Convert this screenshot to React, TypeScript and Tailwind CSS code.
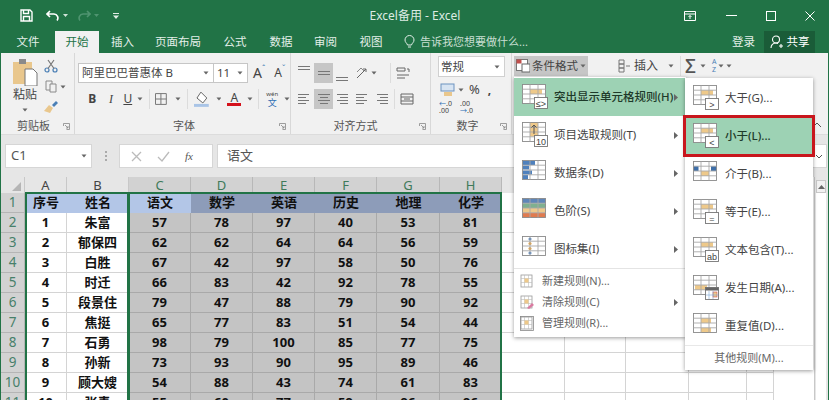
import React from "react";

const CJK = { fontFamily: '"Noto Sans", "Noto Sans CJK SC", sans-serif' };

const rows: [string, string, number, number, number, number, number, number][] = [
  ["1", "朱富", 57, 78, 97, 40, 53, 81],
  ["2", "郁保四", 62, 62, 64, 64, 56, 59],
  ["3", "白胜", 67, 42, 97, 58, 50, 76],
  ["4", "时迁", 66, 83, 42, 92, 78, 55],
  ["5", "段景住", 79, 47, 88, 79, 90, 92],
  ["6", "焦挺", 65, 77, 83, 51, 54, 44],
  ["7", "石勇", 98, 79, 100, 85, 77, 75],
  ["8", "孙新", 73, 93, 90, 95, 89, 46],
  ["9", "顾大嫂", 54, 88, 43, 74, 61, 83],
  ["10", "张青", 55, 60, 77, 59, 96, 96],
];

function Caret({ className = "" }: { className?: string }) {
  return (
    <svg width="6" height="4" viewBox="0 0 6 4" className={className}>
      <path d="M0.5 0.5h5L3 3.5z" fill="#666" />
    </svg>
  );
}

function Launcher() {
  return (
    <svg width="7" height="7" viewBox="0 0 7 7" className="absolute right-[4px] bottom-[4px]">
      <path d="M0.5 3V0.5H6.5V6.5H3.5M2 2l3 3M5 3v2H3" fill="none" stroke="#888" strokeWidth="0.8" />
    </svg>
  );
}

function Save() {
  return (
    <svg width="13" height="13" viewBox="0 0 13 13" fill="none" stroke="#fff" strokeWidth="1.4">
      <path d="M1 1h9l2 2v9H1z" />
      <path d="M3.500 1v3.500h5V1M3.500 12V7.500h6V12" />
    </svg>
  );
}

function Lines({ kind }: { kind: "l" | "c" | "r" | "top" | "mid" | "bot" }) {
  const xs: Record<string, [number, number][]> = {
    l: [[1, 12], [1, 9], [1, 12], [1, 9]],
    c: [[1, 13], [3, 11], [1, 13], [3, 11]],
    r: [[2, 13], [5, 13], [2, 13], [5, 13]],
    top: [[1, 13], [1, 13]],
    mid: [[1, 13], [1, 13]],
    bot: [[1, 13], [1, 13]],
  };
  const ys: Record<string, number[]> = {
    l: [2.5, 5.5, 8.5, 11.5],
    c: [2.5, 5.5, 8.5, 11.5],
    r: [2.5, 5.5, 8.5, 11.5],
    top: [2.5, 5.5],
    mid: [5.5, 8.5],
    bot: [8.5, 11.5],
  };
  return (
    <svg width="14" height="14" viewBox="0 0 14 14" stroke="#777" strokeWidth="1">
      {ys[kind].map((y, i) => (
        <line key={i} x1={xs[kind][i][0]} x2={xs[kind][i][1]} y1={y} y2={y} />
      ))}
    </svg>
  );
}

type Kind = "gt" | "lt" | "btw" | "eq" | "ab" | "date" | "dup" | "hl" | "top" | "bar" | "scale" | "set";

function Grid() {
  return (
    <g stroke="#8a8a8a" strokeWidth="0.9" fill="none">
      <rect x="0.5" y="0.5" width="23" height="19" />
      <path d="M8 .5v19M16 .5v19M.5 5.200h23M.5 10h23M.5 14.800h23" stroke="#a8a8a8" />
    </g>
  );
}

function Badge({ t }: { t: string }) {
  return (
    <g>
      <rect x="12.500" y="13.500" width="13" height="11" fill="#fff" stroke="#777" strokeWidth="0.9" />
      <text x="19" y="22.500" textAnchor="middle" fontSize="9" fill="#444" fontFamily="Liberation Sans, sans-serif">
        {t}
      </text>
    </g>
  );
}

function MenuIcon({ kind }: { kind: Kind }) {
  return (
    <svg width="27" height="26" viewBox="0 0 27 26" className="shrink-0">
      <rect x="0.5" y="0.5" width="23" height="19" fill="#fff" />
      {(kind === "gt" || kind === "lt" || kind === "eq" || kind === "ab" || kind === "hl") && (
        <rect x="8" y="5.200" width="12" height="4.800" fill="#eec98a" />
      )}
      {kind === "btw" && (
        <>
          <rect x="8" y="10" width="8" height="5" fill="#eec98a" />
          <rect x="0.5" y="5.200" width="5" height="4.800" fill="#3f6fa8" />
          <rect x="18" y="5.200" width="5.500" height="4.800" fill="#3f6fa8" />
        </>
      )}
      {kind === "date" && <rect x="2" y="10" width="12" height="4.800" fill="#eec98a" />}
      {kind === "dup" && (
        <>
          <rect x="8" y="5.200" width="10" height="4.800" fill="#eec98a" />
          <rect x="8" y="14.800" width="10" height="4.800" fill="#eec98a" />
        </>
      )}
      {kind === "top" && <rect x="8" y="0.5" width="8" height="14" fill="#eec98a" />}
      {kind === "bar" && (
        <>
          <rect x="1" y="1" width="12" height="4" fill="#4f81bd" />
          <rect x="1" y="5.500" width="6" height="4" fill="#4f81bd" />
          <rect x="1" y="10.500" width="9" height="4" fill="#4f81bd" />
          <rect x="1" y="15" width="5" height="4" fill="#4f81bd" />
        </>
      )}
      {kind === "scale" && (
        <>
          <rect x="0.5" y="0.5" width="23" height="4.700" fill="#5f86b8" />
          <rect x="0.5" y="5.200" width="23" height="4.800" fill="#7fb08f" />
          <rect x="0.5" y="10" width="23" height="4.800" fill="#eec98a" />
          <rect x="0.5" y="14.800" width="23" height="4.700" fill="#e07b4f" />
        </>
      )}
      {kind === "set" && (
        <>
          <circle cx="8" cy="3" r="1.500" fill="#4f81bd" />
          <circle cx="8" cy="7.600" r="1.500" fill="#e8a13a" />
          <circle cx="8" cy="12.400" r="1.500" fill="#e8a13a" />
          <circle cx="8" cy="17" r="1.500" fill="#4f81bd" />
        </>
      )}
      <Grid />
      {kind === "top" && <path d="M12 12V3M9.500 5.500L12 3l2.500 2.500" stroke="#555" fill="none" strokeWidth="1" />}
      {kind === "hl" && <Badge t="≤>" />}
      {kind === "gt" && <Badge t=">" />}
      {kind === "lt" && <Badge t="<" />}
      {kind === "eq" && <Badge t="=" />}
      {kind === "ab" && <Badge t="ab" />}
      {kind === "top" && <Badge t="10" />}
      {kind === "date" && (
        <g>
          <rect x="12.500" y="12.500" width="13" height="12" fill="#fff" stroke="#777" strokeWidth="0.9" />
          <rect x="12.500" y="12.500" width="13" height="3" fill="#666" />
          <rect x="20" y="17" width="4" height="5" fill="#eec98a" stroke="#c55" strokeWidth="0.6" />
          <path d="M16 16v8M20 16v8M13 20h12" stroke="#7da7d9" strokeWidth="0.6" />
        </g>
      )}
    </svg>
  );
}

function SmallRule({ kind }: { kind: "new" | "clear" | "manage" }) {
  return (
    <svg width="14" height="15" viewBox="0 0 14 15" className="shrink-0">
      <rect x="1" y="1" width="11" height="12" fill="#fff" stroke="#999" strokeWidth="0.8" />
      <path d="M1 4.500h11M1 8.500h11M4.500 1v12M8.500 1v12" stroke="#bbb" strokeWidth="0.6" />
      <rect x="4.500" y="4.500" width="4" height="4" fill="#eec98a" />
      {kind === "clear" && <path d="M7 13l5-5 2 2-5 4z" fill="#d97aa0" />}
      {kind === "manage" && <rect x="0.500" y="0.500" width="13" height="14" fill="none" stroke="#888" strokeWidth="0.8" />}
    </svg>
  );
}

function Arrow() {
  return (
    <svg width="4" height="7" viewBox="0 0 4 7" className="shrink-0">
      <path d="M0 0l4 3.500L0 7z" fill="#666" />
    </svg>
  );
}

function M1({ kind, label, active }: { kind: Kind; label: string; active?: boolean }) {
  return (
    <div className={active ? "h-[38px] flex items-center pl-[8px] pr-[8px] bg-[#9dd2b4]" : "h-[38px] flex items-center pl-[8px] pr-[8px]"}>
      <MenuIcon kind={kind} />
      <span className={active ? "ml-[5px] flex-1 text-[11.5px] font-medium text-[#1e3a2a]" : "ml-[5px] flex-1 text-[11.5px] text-[#444]"}>{label}</span>
      <Arrow />
    </div>
  );
}

function M2({ kind, label, active }: { kind: Kind; label: string; active?: boolean }) {
  return (
    <div
      className={
        active
          ? "h-[38px] flex items-center pl-[8px] bg-[#9dd2b4] outline-[3px] -outline-offset-1 outline-[#c8161d] relative"
          : "h-[38px] flex items-center pl-[8px]"
      }
    >
      <MenuIcon kind={kind} />
      <span className={active ? "ml-[5px] text-[11.5px] font-medium text-[#1e3a2a]" : "ml-[5px] text-[11.5px] text-[#444]"}>{label}</span>
    </div>
  );
}

function Ribbon() {
  return (
    <div className="h-[82px] bg-[#f1f1f1] flex text-[#444] border-b border-[#dcdcdc]">
      {/* clipboard */}
      <div className="w-[74px] relative flex flex-col border-r border-[#d8d8d8] shrink-0">
        <div className="flex pl-[11px] pt-[6px] h-[65px]">
          <div className="w-[26px] flex flex-col items-center">
            <svg width="26" height="27" viewBox="0 0 26 27">
              <rect x="1" y="3" width="19" height="22" fill="#e9c78d" />
              <rect x="7" y="0" width="7" height="5" fill="#8a8a8a" />
              <path d="M13 10h8l4 4v13H13z" fill="#fff" stroke="#777" />
            </svg>
            <span className="text-[12px] leading-[14px] mt-[2px]">粘贴</span>
            <Caret className="mt-[6px]" />
          </div>
          <div className="ml-[6px] flex flex-col items-center gap-[7px]">
            <svg width="14" height="14" viewBox="0 0 14 14" fill="none" stroke="#4a7fb5" strokeWidth="1.2">
              <circle cx="3" cy="11" r="2" />
              <circle cx="11" cy="11" r="2" />
              <path d="M4 9.500L10 1M10 9.500L4 1" stroke="#777" />
            </svg>
            <div className="flex items-center gap-[3px] -mr-[8px]">
              <svg width="12" height="13" viewBox="0 0 12 13" fill="none" stroke="#8a8a8a">
                <path d="M1 1h6v9H1z" />
                <path d="M5 4h6v8H5z" fill="#f1f1f1" />
              </svg>
              <Caret />
            </div>
            <svg width="14" height="13" viewBox="0 0 14 13">
              <path d="M0 11l5-6 4 3-3 5z" fill="#e9c78d" />
              <path d="M8 5l4-4 2 2-4 4z" fill="#4a7fb5" />
            </svg>
          </div>
        </div>
        <div className="text-[11px] leading-[16px] text-center pr-[8px] text-[#555]">剪贴板</div>
        <Launcher />
      </div>

      {/* font */}
      <div className="w-[216px] relative flex flex-col border-r border-[#d8d8d8] shrink-0 pl-[3px]">
        <div className="mt-[10px] flex items-center h-[20px]">
          <div className="w-[136px] h-[20px] bg-white border border-[#c6c6c6] flex items-center justify-between pl-[3px] pr-[4px] text-[11.5px]">
            <span>阿里巴巴普惠体 B</span>
            <Caret />
          </div>
          <div className="w-[34px] h-[20px] bg-white border border-l-0 border-[#c6c6c6] flex items-center justify-between pl-[3px] pr-[4px] text-[11.5px]">
            <span>11</span>
            <Caret />
          </div>
          <span className="ml-[5px] text-[14px] leading-none">A</span>
          <span className="text-[8px] leading-none -mt-[8px] text-[#4a7fb5]">ˆ</span>
          <span className="ml-[9px] text-[12px] leading-none">A</span>
          <span className="text-[8px] leading-none -mt-[8px] text-[#4a7fb5]">ˇ</span>
        </div>
        <div className="mt-[6px] flex items-center h-[20px] pl-[5px] text-[12px]">
          <span className="w-[19px] text-center font-bold">B</span>
          <span className="w-[19px] text-center italic" style={{ fontFamily: "Liberation Serif, serif" }}>I</span>
          <span className="w-[15px] text-center underline">U</span>
          <Caret className="ml-[2px]" />
          <span className="w-px h-[20px] bg-[#dcdcdc] ml-[6px]" />
          <svg width="12" height="12" viewBox="0 0 12 12" fill="none" stroke="#777" className="ml-[5px]">
            <path d="M.5.500h11v11H.500zM6 .500v11M.5 6h11" />
          </svg>
          <Caret className="ml-[8px]" />
          <span className="w-px h-[20px] bg-[#dcdcdc] ml-[6px]" />
          <svg width="16" height="16" viewBox="0 0 16 16" className="ml-[6px]">
            <path d="M7 1l6 6-4 5-6-5z" fill="#fff" stroke="#666" />
            <rect x="0" y="13" width="15" height="3" fill="#a9c4e6" />
          </svg>
          <Caret className="ml-[6px]" />
          <span className="ml-[6px] w-[14px] flex flex-col items-center">
            <span className="text-[12px] leading-[11px]">A</span>
            <span className="w-[14px] h-[3px] bg-[#d4111b]" />
          </span>
          <Caret className="ml-[6px]" />
          <span className="w-px h-[20px] bg-[#dcdcdc] ml-[5px]" />
          <span className="ml-[6px] flex flex-col items-center w-[14px] leading-none">
            <span className="text-[6px] leading-[7px]">wén</span>
            <span className="text-[9px] leading-[9px] text-[#2f6fb5]">文</span>
          </span>
          <Caret className="ml-[5px]" />
        </div>
        <div className="mt-[9px] text-[11px] leading-[16px] text-center text-[#555]">字体</div>
        <Launcher />
      </div>

      {/* alignment */}
      <div className="w-[140px] relative flex flex-col border-r border-[#d8d8d8] shrink-0">
        <div className="mt-[10px] flex items-center h-[20px] pl-[6px]">
          <span className="w-[14px] flex justify-center -mt-[5px]"><Lines kind="top" /></span>
          <span className="w-[19px] h-[20px] bg-[#c6c6c6] flex items-center justify-center ml-[3px]"><Lines kind="mid" /></span>
          <span className="w-[14px] flex justify-center ml-[2px] mt-[5px]"><Lines kind="bot" /></span>
          <svg width="14" height="14" viewBox="0 0 14 14" className="ml-[6px]" stroke="#666" fill="none">
            <path d="M2 12L11 3M8 3h3v3" />
            <path d="M2 6l4-4 3 3" stroke="#888" />
          </svg>
          <Caret className="ml-[2px]" />
          <span className="w-px h-[20px] bg-[#dcdcdc] ml-[13px]" />
          <svg width="14" height="14" viewBox="0 0 14 14" stroke="#666" fill="none" className="ml-[5px]">
            <path d="M1 2h8v3H1zM1 9h12M1 12h8M11 3h2v3" />
          </svg>
        </div>
        <div className="mt-[6px] flex items-center h-[20px] pl-[6px]">
          <span className="w-[14px]"><Lines kind="l" /></span>
          <span className="w-[19px] h-[20px] bg-[#c6c6c6] flex items-center justify-center ml-[3px]"><Lines kind="c" /></span>
          <span className="w-[14px] ml-[2px]"><Lines kind="r" /></span>
          <span className="w-[14px] ml-[6px]"><Lines kind="l" /></span>
          <span className="w-[14px] ml-[6px]"><Lines kind="r" /></span>
          <span className="w-px h-[20px] bg-[#dcdcdc] ml-[5px]" />
          <svg width="14" height="14" viewBox="0 0 14 14" stroke="#666" fill="none" className="ml-[5px]">
            <path d="M1 2h12v10H1zM1 5h12M1 9h12M4 7h6" />
          </svg>
        </div>
        <div className="mt-[9px] text-[11px] leading-[16px] text-center pr-[10px] text-[#555]">对齐方式</div>
        <Launcher />
      </div>

      {/* number */}
      <div className="w-[81px] relative flex flex-col border-r border-[#d8d8d8] shrink-0 pl-[7px]">
        <div className="mt-[3px] w-[67px] h-[21px] bg-white border border-[#d0d0d0] flex items-center justify-between pl-[2px] pr-[4px] text-[11.5px]">
          <span>常规</span>
          <Caret />
        </div>
        <div className="mt-[4px] flex items-center h-[18px] pl-[2px]">
          <svg width="15" height="14" viewBox="0 0 15 14">
            <rect x="1" y="1" width="13" height="7" fill="#d7e4f2" stroke="#6c93c0" />
            <rect x="4" y="9" width="8" height="4" fill="#e9c78d" />
          </svg>
          <Caret className="ml-[3px]" />
          <span className="ml-[5px] text-[13px]">%</span>
          <span className="ml-[8px] text-[12px] font-bold">,</span>
        </div>
        <div className="mt-[1px] flex items-center gap-[7px] text-[7px] leading-[7px] pl-[1px]">
          <span className="w-[14px]"><span className="text-[#2f6fb5]">←</span>.0<br />.00</span>
          <span className="w-[14px]">.00<br /><span className="text-[#2f6fb5]">→</span>.0</span>
        </div>
        <div className="mt-auto text-[11px] leading-[16px] text-center pr-[14px] text-[#555]">数字</div>
        <Launcher />
      </div>

      {/* styles / cells */}
      <div className="flex-1 pt-[3px] pl-[2px] relative">
        <div className="flex items-center h-[20px]">
          <div className="w-[74px] h-[20px] bg-[#c6c6c6] flex items-center pl-[2px] text-[11.5px]">
            <svg width="14" height="14" viewBox="0 0 14 14" className="shrink-0">
              <rect x="0.500" y="0.500" width="11" height="11" fill="#fff" stroke="#777" />
              <rect x="0.500" y="0.500" width="5" height="4" fill="#c0504d" />
              <rect x="6" y="5" width="8" height="8" fill="#fff" stroke="#666" />
            </svg>
            <span className="ml-[2px]">条件格式</span>
            <Caret className="ml-[2px]" />
          </div>
          <svg width="13" height="14" viewBox="0 0 13 14" stroke="#777" fill="none" className="ml-[30px]">
            <path d="M1 1h5v4H1zM1 5h5v4H1zM1 9h5v4H1zM8 7h4" />
          </svg>
          <span className="ml-[3px] text-[12px]">插入</span>
          <Caret className="ml-[10px]" />
          <span className="w-px h-[20px] bg-[#dcdcdc] ml-[6px]" />
          <span className="ml-[4px] text-[19px] leading-none text-[#555] font-medium">Σ</span>
          <Caret className="ml-[4px]" />
          <span className="ml-[6px] text-[7px] leading-[8px] text-[#4a7fb5]">A<br />Z</span>
          <Caret className="ml-[2px]" />
          <Caret className="ml-[2px]" />
        </div>
        <svg width="10" height="6" viewBox="0 0 10 6" className="absolute right-[6px] bottom-[6px]" fill="none" stroke="#555">
          <path d="M1 5l4-4 4 4" />
        </svg>
      </div>
    </div>
  );
}

function FormulaBar() {
  return (
    <div className="h-[42px] bg-[#e6e6e6] shrink-0 flex pt-[9px] pl-[4px] pr-[1px]">
      <div className="w-[87px] h-[24px] bg-white border border-[#d6d6d6] flex items-center justify-between pl-[5px] pr-[4px] text-[13px] text-[#555]">
        <span>C1</span>
        <Caret />
      </div>
      <div className="w-[27px] flex flex-col items-center justify-center gap-[2px] pb-[9px]">
        <span className="w-[2px] h-[2px] bg-[#aaa]" />
        <span className="w-[2px] h-[2px] bg-[#aaa]" />
        <span className="w-[2px] h-[2px] bg-[#aaa]" />
      </div>
      <div className="w-[94px] h-[24px] bg-white border border-[#d6d6d6] flex items-center pl-[11px]">
        <svg width="11" height="11" viewBox="0 0 11 11" stroke="#bbb" strokeWidth="1.3"><path d="M1 1l9 9M10 1l-9 9" /></svg>
        <svg width="13" height="11" viewBox="0 0 13 11" stroke="#bbb" strokeWidth="1.3" fill="none" className="ml-[15px]"><path d="M1 6l4 4 7-9" /></svg>
        <span className="ml-[15px] text-[11px] italic text-[#555]" style={{ fontFamily: "Liberation Serif, serif" }}>fx</span>
      </div>
      <div className="flex-1 ml-[4px] h-[24px] bg-white border border-[#d6d6d6] flex items-center pl-[9px] text-[13px] text-[#555]">语文</div>
      <div className="w-[15px] h-[24px] flex items-center justify-center bg-white border border-l-0 border-[#d6d6d6]">
        <svg width="8" height="5" viewBox="0 0 8 5" fill="none" stroke="#555"><path d="M1 1l3 3 3-3" /></svg>
      </div>
    </div>
  );
}

const colHeaders = ["A", "B", "C", "D", "E", "F", "G", "H", "I", "J", "K", "L", "M"];
const gridCols = "grid grid-cols-[24px_42px_62px_62px_62px_62px_62px_63px_62px_63px_61px_63px_58px_27px] grid-rows-[16px] auto-rows-[20px]";

function Sheet() {
  return (
    <div className="relative flex-1 overflow-hidden bg-white">
      <div className={gridCols}>
        {/* column header row */}
        <div className="bg-[#e6e6e6] border-r border-[#c8c8c8] flex justify-end items-end pr-[3px] pb-[2px]">
          <svg width="9" height="9" viewBox="0 0 9 9"><path d="M9 0v9H0z" fill="#b5b5b5" /></svg>
        </div>
        {colHeaders.map((c, i) => {
          const sel = i >= 2 && i <= 7;
          return (
            <div
              key={c}
              className={
                sel
                  ? "bg-[#d2d2d2] border-r border-[#b8b8b8] flex items-center justify-center text-[13px] leading-[16px] text-[#3f7a5a]"
                  : "bg-[#e6e6e6] border-r border-[#c8c8c8] flex items-center justify-center text-[13px] leading-[16px] text-[#444]"
              }
            >
              {c}
            </div>
          );
        })}
        {/* row 1 */}
        <div className="bg-[#d2d2d2] border-b border-r border-[#b5b5b5] flex items-center justify-center text-[13.5px] text-[#47806a]">1</div>
        {["序号", "姓名", "语文", "数学", "英语", "历史", "地理", "化学"].map((h, i) => (
          <div
            key={h}
            className={
              i < 3
                ? "bg-[#b3c6e7] flex items-center justify-center text-[13px] font-bold text-[#111]"
                : "bg-[#8d9cb9] flex items-center justify-center text-[13px] font-bold text-[#111]"
            }
          >
            {h}
          </div>
        ))}
        {Array.from({ length: 5 }).map((_, i) => (
          <div key={i} className="border-r border-b border-[#d4d4d4]" />
        ))}
        {/* data rows */}
        {rows.map((r, ri) => (
          <React.Fragment key={ri}>
            <div className="bg-[#d2d2d2] border-b border-r border-[#b5b5b5] flex items-center justify-center text-[13.5px] text-[#47806a]">
              {ri + 2}
            </div>
            {r.slice(0, 2).map((v, i) => (
              <div key={i} className="bg-white border-r border-b border-[#d4d4d4] flex items-center justify-center text-[13px] font-bold text-[#111]">
                {v}
              </div>
            ))}
            {r.slice(2).map((v, i) => (
              <div key={i} className="bg-[#c4c4c4] border-r border-b border-[#a9a9a9] flex items-center justify-center text-[13px] font-bold text-[#111]">
                {v}
              </div>
            ))}
            {Array.from({ length: 5 }).map((_, i) => (
              <div key={i} className="border-r border-b border-[#d4d4d4]" />
            ))}
          </React.Fragment>
        ))}
      </div>
      {/* selection outlines */}
      <div className="absolute left-[24px] top-[15px] w-[104px] h-[300px] border-2 border-[#217346] pointer-events-none" />
      <div className="absolute left-[127px] top-[15px] w-[374px] h-[300px] border-2 border-[#217346] pointer-events-none" />
    </div>
  );
}

export default function App() {
  return (
    <div className="w-[829px] h-[400px] overflow-hidden relative flex flex-col bg-[#f1f1f1] border-l border-r border-[#217346]" style={CJK}>
      {/* title bar */}
      <div className="h-[31px] bg-[#217346] shrink-0 flex items-center text-white pl-[19px] relative">
        <Save />
        <svg width="14" height="12" viewBox="0 0 14 12" fill="none" stroke="#fff" strokeWidth="1.6" className="ml-[13px]">
          <path d="M4 1L1 4l3 3M1 4h7a4 4 0 0 1 3 6.500" />
        </svg>
        <svg width="5" height="3" viewBox="0 0 5 3" className="ml-[3px]"><path d="M0 0h5L2.500 3z" fill="#cfe3d8" /></svg>
        <svg width="14" height="12" viewBox="0 0 14 12" fill="none" stroke="#4f9470" strokeWidth="1.6" className="ml-[9px]">
          <path d="M10 1l3 3-3 3M13 4H6a4 4 0 0 0-3 6.500" />
        </svg>
        <svg width="5" height="3" viewBox="0 0 5 3" className="ml-[3px]"><path d="M0 0h5L2.500 3z" fill="#4f9470" /></svg>
        <svg width="6" height="6" viewBox="0 0 6 6" className="ml-[14px]" fill="#e0ece5"><path d="M0 0h6v1H0zM0 2.500h6L3 6z" /></svg>
        <div className="flex-1 text-center text-[12px] text-[#dcebe3] pl-[27px]">Excel备用 - Excel</div>
        <div className="flex items-center pr-[13px]">
          <svg width="12" height="10" viewBox="0 0 12 10" fill="none" stroke="#fff"><path d="M.5.500h11v9H.500zM.5 3h11M6 8V4.500M4.500 6L6 4.500 7.500 6" /></svg>
          <svg width="11" height="2" viewBox="0 0 11 2" className="ml-[30px]"><rect width="11" height="1" fill="#fff" /></svg>
          <svg width="10" height="10" viewBox="0 0 10 10" fill="none" stroke="#fff" className="ml-[29px]"><rect x=".5" y=".5" width="9" height="9" /></svg>
          <svg width="10" height="10" viewBox="0 0 10 10" fill="none" stroke="#fff" className="ml-[29px]"><path d="M.5.500l9 9M9.500.500l-9 9" /></svg>
        </div>
      </div>

      {/* tabs */}
      <div className="h-[22px] bg-[#217346] shrink-0 flex items-center text-[11.5px] text-[#e4efe9]">
        <span className="w-[54px] text-center">文件</span>
        <span className="w-[44px] h-[22px] flex items-center justify-center bg-[#f1f1f1] text-[#217346]">开始</span>
        <span className="w-[47px] text-center">插入</span>
        <span className="w-[64px] text-center">页面布局</span>
        <span className="w-[50px] text-center">公式</span>
        <span className="w-[42px] text-center">数据</span>
        <span className="w-[47px] text-center">审阅</span>
        <span className="w-[44px] text-center">视图</span>
        <svg width="11" height="14" viewBox="0 0 11 14" fill="none" stroke="#e4efe9" className="ml-[11px]">
          <path d="M3.500 10C3 8 1 7.500 1 5a4.500 4.500 0 0 1 9 0c0 2.500-2 3-2.500 5zM4 12h3" />
        </svg>
        <span className="ml-[5px] text-[11px] text-[#c9dfd3]">告诉我您想要做什么...</span>
        <span className="ml-auto">登录</span>
        <span className="ml-[9px] mr-[13px] w-[51px] h-[22px] bg-[#1a5c38] flex items-center justify-center gap-[3px] text-white">
          <svg width="14" height="14" viewBox="0 0 14 14" fill="none" stroke="#fff" strokeWidth="1.1">
            <circle cx="6" cy="4.500" r="3.500" />
            <path d="M1 13c0-3 2-5 5-5 .8 0 1.500.2 2 .4M11 9v4M9 11h4" />
          </svg>
          共享
        </span>
      </div>

      <Ribbon />
      <FormulaBar />

      <div className="flex-1 flex min-h-0">
        <Sheet />
        <div className="w-[14px] shrink-0 bg-[#e6e6e6] border-l border-[#c8c8c8] pl-px pr-[2px]">
          <div className="h-[3px]" />
          <div className="h-[13px] bg-[#f1f1f1] border border-[#c8c8c8] flex items-center justify-center">
            <svg width="7" height="4" viewBox="0 0 7 4"><path d="M0 4l3.500-4L7 4z" fill="#666" /></svg>
          </div>
          <div className="h-[220px] bg-white" />
        </div>
      </div>

      {/* conditional format menu */}
      <div className="absolute left-[513px] top-[77px] w-[172px] h-[260px] bg-white shadow-[0_1px_4px_rgba(0,0,0,0.4)] pt-px">
        <M1 kind="hl" label="突出显示单元格规则(H)" active />
        <M1 kind="top" label="项目选取规则(T)" />
        <M1 kind="bar" label="数据条(D)" />
        <M1 kind="scale" label="色阶(S)" />
        <M1 kind="set" label="图标集(I)" />
        <div className="h-px bg-[#e4e4e4]" />
        <div className="h-[21px] mt-[2px] flex items-center pl-[6px] text-[11px] text-[#666]">
          <SmallRule kind="new" />
          <span className="ml-[8px]">新建规则(N)...</span>
        </div>
        <div className="h-[21px] flex items-center pl-[6px] pr-[8px] text-[11px] text-[#666]">
          <SmallRule kind="clear" />
          <span className="ml-[8px] flex-1">清除规则(C)</span>
          <Arrow />
        </div>
        <div className="h-[21px] flex items-center pl-[6px] text-[11px] text-[#666]">
          <SmallRule kind="manage" />
          <span className="ml-[8px]">管理规则(R)...</span>
        </div>
      </div>

      {/* highlight submenu */}
      <div className="absolute left-[684px] top-[78px] w-[128px] h-[292px] bg-white shadow-[0_1px_4px_rgba(0,0,0,0.4)] pt-px">
        <M2 kind="gt" label="大于(G)..." />
        <M2 kind="lt" label="小于(L)..." active />
        <M2 kind="btw" label="介于(B)..." />
        <M2 kind="eq" label="等于(E)..." />
        <M2 kind="ab" label="文本包含(T)..." />
        <M2 kind="date" label="发生日期(A)..." />
        <M2 kind="dup" label="重复值(D)..." />
        <div className="h-px bg-[#e8e8e8]" />
        <div className="h-[24px] flex items-center justify-center text-[11px] text-[#666]">其他规则(M)...</div>
      </div>
    </div>
  );
}
